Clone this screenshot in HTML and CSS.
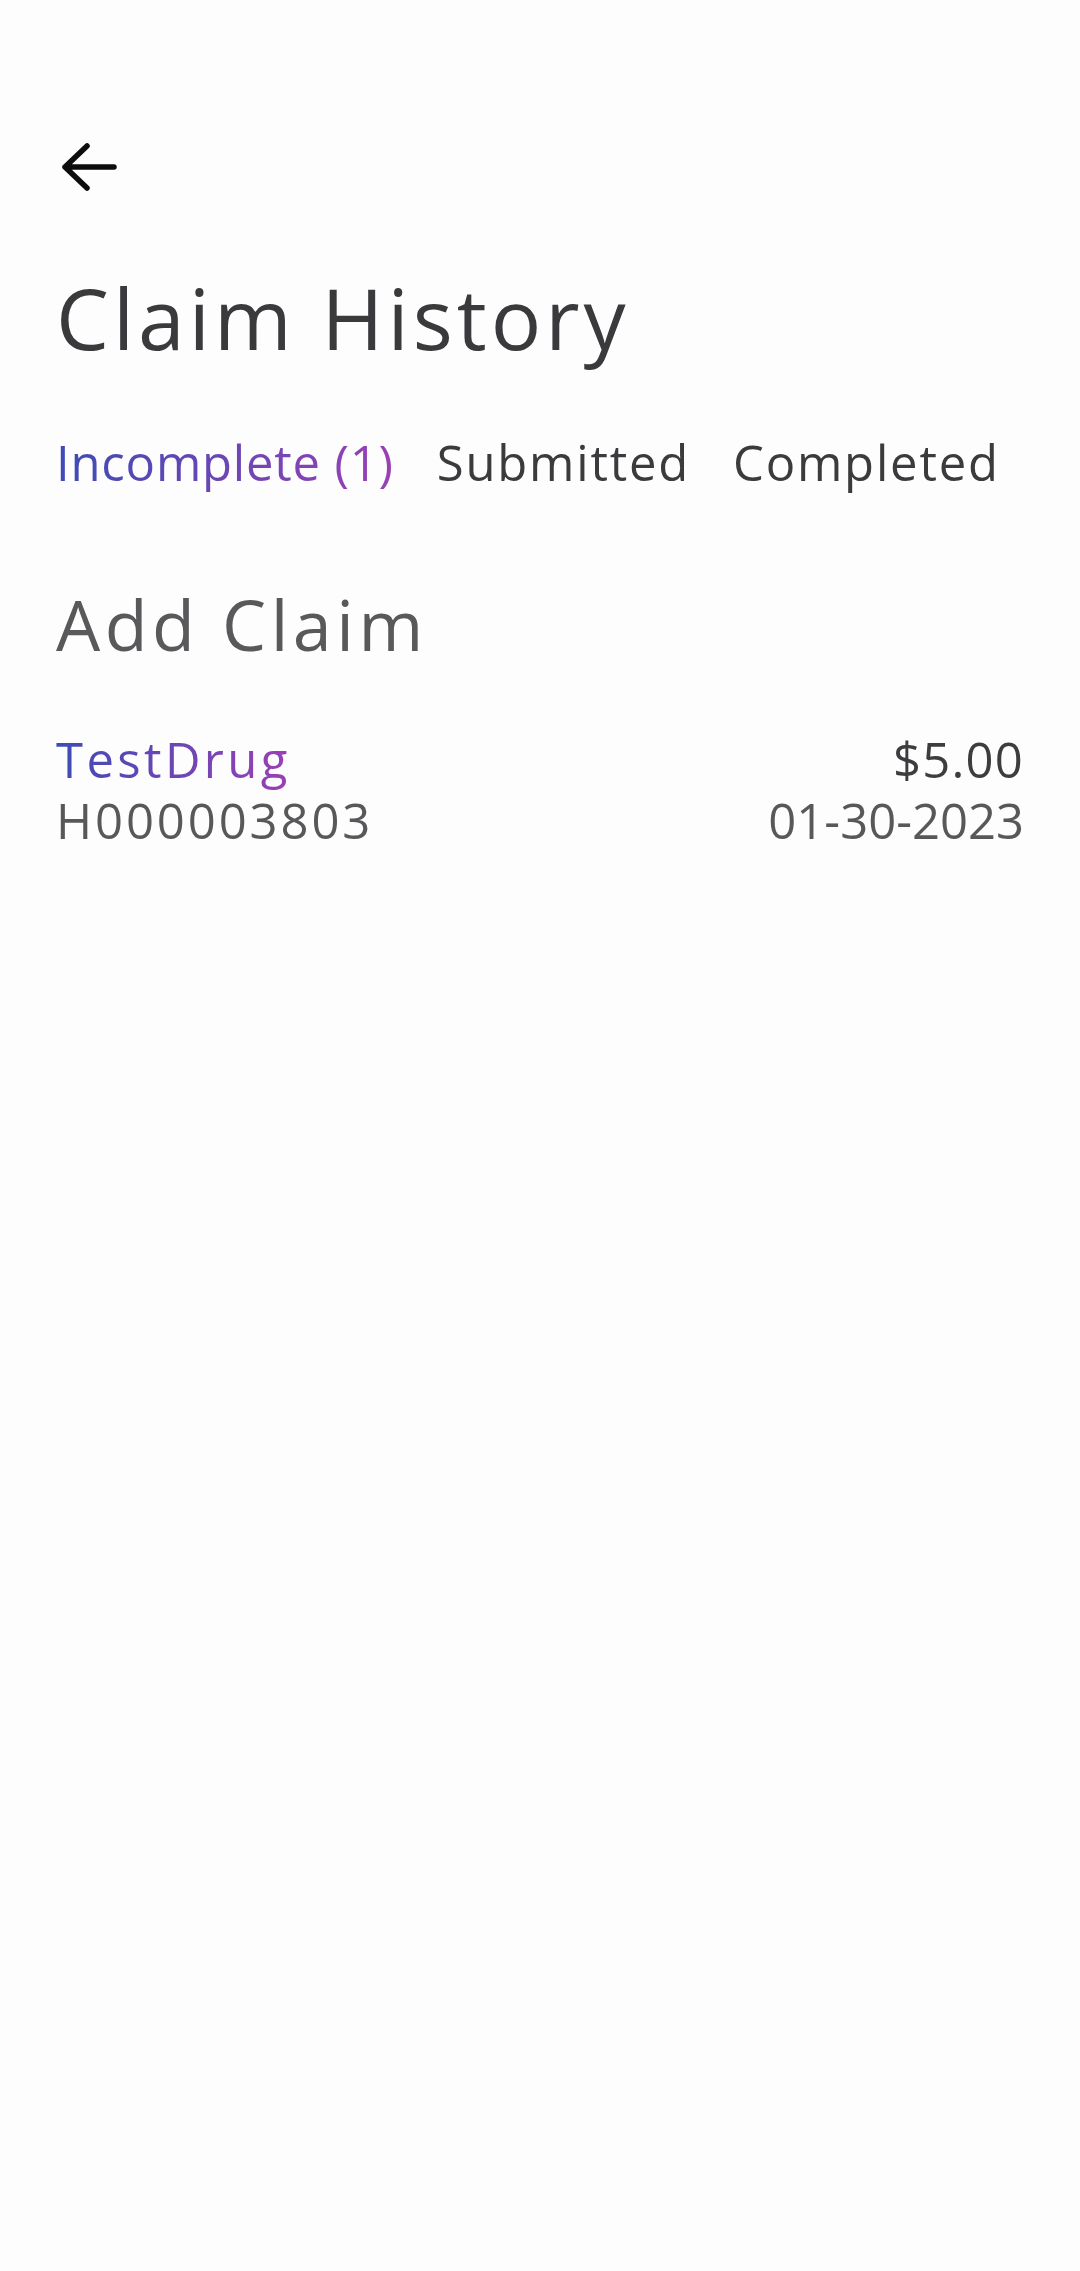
FILE: index.html
```html
<!DOCTYPE html>
<html lang="en">
<head>
    <meta charset="UTF-8">
    <meta name="viewport" content="width=device-width, initial-scale=1.0">
    <title>Claim History</title>
    <link rel="stylesheet" href="styles.css">
</head>
<body>

<div class="page">
    <header class="top-bar">
        <button class="back" type="button" aria-label="Back">
            <svg width="56" height="48" viewBox="0 0 56 48">
                <path d="M4 24 L53 24 M26 3 L4 24 L26 45" fill="none" stroke="#0d0d0d" stroke-width="5.5" stroke-linecap="round" stroke-linejoin="round"/>
            </svg>
        </button>
    </header>

    <h1 class="title">Claim History</h1>

    <nav class="tabs">
        <span class="tab active">Incomplete (1)</span>
        <span class="tab">Submitted</span>
        <span class="tab">Completed</span>
    </nav>

    <h2 class="add-claim">Add Claim</h2>

    <div class="claim">
        <div class="claim-left">
            <span class="drug">TestDrug</span>
            <span class="claim-id">H000003803</span>
        </div>
        <div class="claim-right">
            <span class="amount">$5.00</span>
            <span class="date">01-30-2023</span>
        </div>
    </div>
</div>

</body>
</html>
```

FILE: styles.css
```css
body {
    margin: 0;
    background-color: #fefdfe;
    font-family: "Open Sans", "DejaVu Sans", sans-serif;
    color: #3a393c;
}
.page {
    padding: 0 56px 0 56px;
}
.top-bar {
    padding-top: 143px;
}
.back {
    display: block;
    margin-left: 5px;
    padding: 0;
    border: none;
    background: none;
    cursor: pointer;
}
.back svg {
    display: block;
}
.title {
    margin: 77px 0 0;
    font-size: 84px;
    font-weight: 400;
    line-height: 1.2;
    letter-spacing: 4px;
    color: #3a393c;
}
.tabs {
    display: flex;
    gap: 43px;
    margin-top: 64px;
    font-size: 49px;
    line-height: 1.2;
    letter-spacing: 1.8px;
    color: #3b3a3d;
}
.tab.active,
.drug {
    background: linear-gradient(90deg, #3d4cb4, #9a40b4);
    -webkit-background-clip: text;
    background-clip: text;
    color: transparent;
}
.tab.active {
    letter-spacing: 0.8px;
}
.add-claim {
    margin: 90px 0 0;
    font-size: 70px;
    font-weight: 400;
    line-height: 1.2;
    letter-spacing: 4.5px;
    color: #59585b;
}
.claim {
    display: flex;
    justify-content: space-between;
    margin-top: 63px;
    font-size: 49px;
    line-height: 61px;
}
.claim-left,
.claim-right {
    display: flex;
    flex-direction: column;
}
.claim-left {
    align-items: flex-start;
}
.claim-right {
    align-items: flex-end;
}
.drug {
    letter-spacing: 3.4px;
}
.claim-id {
    letter-spacing: 2.9px;
    color: #58575a;
}
.amount {
    letter-spacing: 1.2px;
    color: #3d3c3f;
}
.date {
    color: #58575a;
}
```
